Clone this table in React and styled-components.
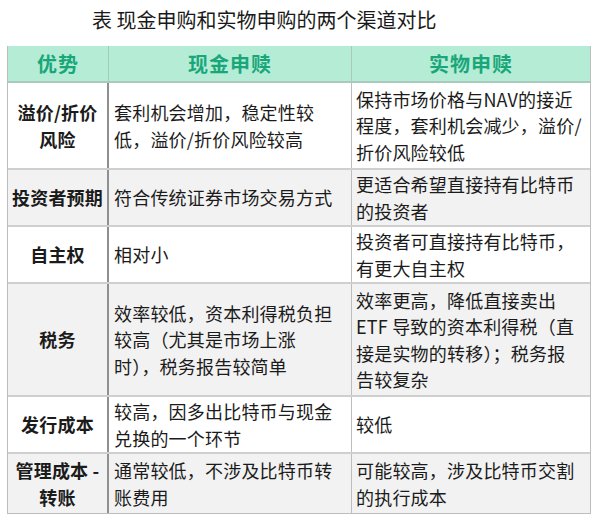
import React from "react";
import styled, { createGlobalStyle } from "styled-components";

const Global = createGlobalStyle`
  html, body { margin: 0; padding: 0; background: #fff; }
  body { font-family: "Noto Sans CJK SC", "Noto Sans", sans-serif; color: #1e1e1e; }
`;

const Page = styled.div`
  width: 600px;
  height: 520px;
  padding: 0 9px 0 7px;
  box-sizing: border-box;
  background: #fff;
`;

const Title = styled.h1`
  margin: 0;
  height: 46px;
  display: flex;
  align-items: center;
  justify-content: flex-start;
  padding: 0 0 8px 85px;
  box-sizing: border-box;
  font-size: 20px;
  font-weight: 400;
  letter-spacing: 0;
  color: #1a1a1a;
`;

const Table = styled.div`
  border: 1px solid #bdbdbd;
  border-top: none;
`;

const Row = styled.div`
  display: grid;
  grid-template-columns: 101px 243px 1fr;
  height: ${(p) => p.$h}px;
  background: ${(p) => (p.$head ? "#b5ecd6" : p.$alt ? "#f2f2f2" : "#ffffff")};
  border-bottom: 2px solid ${(p) => (p.$head ? "#a8c9bb" : "#cfcfcf")};
  box-sizing: border-box;
  &:last-child { border-bottom: none; }
`;

const Cell = styled.div`
  display: flex;
  flex-direction: column;
  justify-content: center;
  align-items: ${(p) => (p.$center ? "center" : "flex-start")};
  text-align: ${(p) => (p.$center ? "center" : "left")};
  padding: 0 ${(p) => p.$px ?? 5}px;
  border-right: ${(p) => p.$border || "none"};
  font-size: ${(p) => (p.$head ? 20 : 18)}px;
  font-weight: ${(p) => (p.$bold ? 700 : 400)};
  color: ${(p) => (p.$head ? "#19a77a" : "#1b1b1b")};
  line-height: ${(p) => (p.$head ? 34 : 26.5)}px;
  letter-spacing: ${(p) => (p.$head ? "1px" : "0.2px")};
  white-space: nowrap;
`;

const Line = styled.span`
  display: block;
`;

const rows = [
  {
    h: 87,
    a: ["溢价/折价", "风险"],
    b: ["套利机会增加，稳定性较", "低，溢价/折价风险较高"],
    c: ["保持市场价格与NAV的接近", "程度，套利机会减少，溢价/", "折价风险较低"],
  },
  {
    h: 57,
    alt: true,
    a: ["投资者预期"],
    b: ["符合传统证券市场交易方式"],
    c: ["更适合希望直接持有比特币", "的投资者"],
  },
  {
    h: 57,
    a: ["自主权"],
    b: ["相对小"],
    c: ["投资者可直接持有比特币，", "有更大自主权"],
  },
  {
    h: 113,
    alt: true,
    a: ["税务"],
    b: ["效率较低，资本利得税负担", "较高（尤其是市场上涨", "时），税务报告较简单"],
    c: ["效率更高，降低直接卖出", "ETF 导致的资本利得税（直", "接是实物的转移）；税务报", "告较复杂"],
  },
  {
    h: 57,
    a: ["发行成本"],
    b: ["较高，因多出比特币与现金", "兑换的一个环节"],
    c: ["较低"],
  },
  {
    h: 59,
    alt: true,
    a: ["管理成本 -", "转账"],
    b: ["通常较低，不涉及比特币转", "账费用"],
    c: ["可能较高，涉及比特币交割", "的执行成本"],
  },
];

const Lines = ({ items }) => items.map((t, i) => <Line key={i}>{t}</Line>);

export default function App() {
  return (
    <>
      <Global />
      <Page>
        <Title>表 现金申购和实物申购的两个渠道对比</Title>
        <Table>
          <Row $head $h={37}>
            <Cell $head $bold $center $border="1px solid #a9c9bc">优势</Cell>
            <Cell $head $bold $center $border="1px solid #a9c9bc">现金申赎</Cell>
            <Cell $head $bold $center>实物申赎</Cell>
          </Row>
          {rows.map((r, i) => (
            <Row key={i} $h={r.h} $alt={r.alt}>
              <Cell $bold $center $px={2} $border="2px solid #8f8f8f">
                <Lines items={r.a} />
              </Cell>
              <Cell $px={5} $border="1px solid #bdbdbd">
                <Lines items={r.b} />
              </Cell>
              <Cell $px={4}>
                <Lines items={r.c} />
              </Cell>
            </Row>
          ))}
        </Table>
      </Page>
    </>
  );
}
